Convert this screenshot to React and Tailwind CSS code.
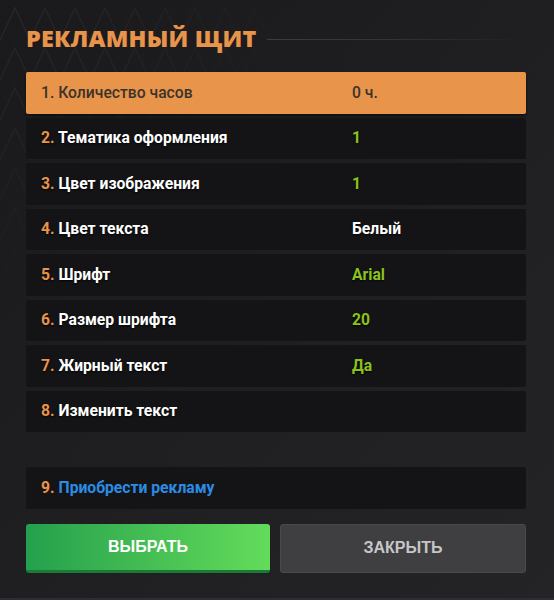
import React from "react";

const rows = [
  { n: "1.", label: "Количество часов", value: "0 ч.", active: true },
  { n: "2.", label: "Тематика оформления", value: "1", tone: "green" },
  { n: "3.", label: "Цвет изображения", value: "1", tone: "green" },
  { n: "4.", label: "Цвет текста", value: "Белый", tone: "white" },
  { n: "5.", label: "Шрифт", value: "Arial", tone: "green" },
  { n: "6.", label: "Размер шрифта", value: "20", tone: "green" },
  { n: "7.", label: "Жирный текст", value: "Да", tone: "green" },
  { n: "8.", label: "Изменить текст", value: "" },
];

function Row({ row }) {
  if (row.active) {
    return (
      <div className="h-[41.5px] flex items-center rounded-[2px] bg-[#e8944a] shadow-[0_2px_3px_rgba(0,0,0,0.5)] px-[15px] text-[15.7px] font-medium text-[#3a332c]">
        <span className="w-[311px]">
          {row.n} {row.label}
        </span>
        <span>{row.value}</span>
      </div>
    );
  }
  return (
    <div className="h-[41.5px] flex items-center rounded-[2px] bg-[#141416] px-[15px] text-[15.7px] font-bold [text-shadow:0_1px_2px_rgba(0,0,0,0.8)]">
      <span className="w-[311px] text-white">
        <span className="text-[#e8944a]">{row.n}</span> {row.label}
      </span>
      <span className={row.tone === "green" ? "text-[#8cc21b]" : "text-white"}>{row.value}</span>
    </div>
  );
}

export default function App() {
  return (
    <div className="relative h-[600px] w-full overflow-hidden bg-gradient-to-br from-[#1a1a1d] to-[#242427] border-b-2 border-[#2e2e32] font-['Roboto',sans-serif]">
      {/* faint chevron pattern behind the content */}
      <svg className="absolute left-0 top-0 opacity-[0.05]" width="320" height="320" viewBox="0 0 320 320">
        <defs>
          <pattern id="chev" width="30" height="40" patternUnits="userSpaceOnUse">
            <path d="M0 40 L15 8 L30 40" fill="none" stroke="#fff" strokeWidth="1.5" />
          </pattern>
          <radialGradient id="fade" cx="0" cy="0" r="1">
            <stop offset="0" stopColor="#fff" />
            <stop offset="1" stopColor="#fff" stopOpacity="0" />
          </radialGradient>
          <mask id="m">
            <rect width="320" height="320" fill="url(#fade)" />
          </mask>
        </defs>
        <rect width="320" height="320" fill="url(#chev)" mask="url(#m)" />
      </svg>

      <div className="relative pl-[26px] pr-[28px]">
        <div className="flex items-center h-[40px] mt-[19px] mb-[13px]">
          <h1 className="text-[23.4px] leading-none font-extrabold tracking-[0.2px] text-[#e8944a] font-['Open_Sans',sans-serif]">
            РЕКЛАМНЫЙ ЩИТ
          </h1>
          <div className="ml-[11px] flex-1 h-[1px] bg-gradient-to-r from-[#3c3c40] via-[#333337] to-transparent" />
        </div>

        <div className="flex flex-col gap-[4px]">
          {rows.map((r) => (
            <Row key={r.n} row={r} />
          ))}
        </div>

        <div className="mt-[35px] h-[41.5px] flex items-center rounded-[2px] bg-[#141416] px-[15px] text-[15.7px] font-bold">
          <span className="text-[#e8944a]">9.</span>
          <span className="ml-[4px] text-[#2b8ce6]">Приобрести рекламу</span>
        </div>

        <div className="mt-[15.5px] flex gap-[10px]">
          <button className="flex-1 h-[48.5px] rounded-[3px] bg-gradient-to-r from-[#22a04c] to-[#63dc5b] border-b-[3px] border-[#1b7a35] text-white text-[16px] font-bold uppercase font-['Liberation_Sans',sans-serif]">
            Выбрать
          </button>
          <button className="flex-1 h-[48.5px] rounded-[3px] bg-[#3f3f42] border border-[#4a4a4e] text-[#c6c6c8] text-[16px] font-bold uppercase font-['Liberation_Sans',sans-serif]">
            Закрыть
          </button>
        </div>
      </div>
    </div>
  );
}
